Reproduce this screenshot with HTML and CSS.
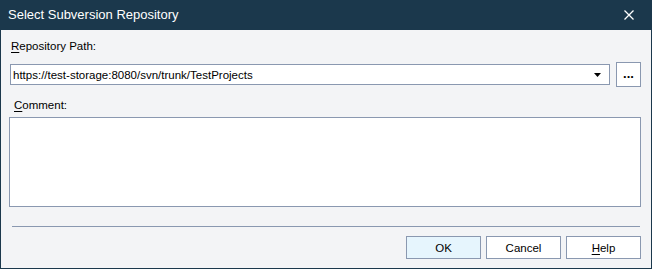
FILE: index.html
```html
<!DOCTYPE html>
<html lang="en">

<head>
  <meta charset="UTF-8" />
  <meta name="viewport" content="width=device-width, initial-scale=1.0" />
  <link rel="stylesheet" href="styles.css">
  <title>Select Subversion Repository</title>
</head>

<body>
  <div class="dialog">
    <div class="titlebar">
      <span class="title">Select Subversion Repository</span>
      <button class="close" aria-label="Close">
        <svg width="10" height="10" viewBox="0 0 10 10">
          <path d="M0.5 0.5 L9.5 9.5 M9.5 0.5 L0.5 9.5" stroke="#fff" stroke-width="1.3" fill="none" />
        </svg>
      </button>
    </div>

    <div class="content">
      <label class="label path-label"><u>R</u>epository Path:</label>
      <div class="path-row">
        <div class="combo">
          <span class="combo-text">https://test-storage:8080/svn/trunk/TestProjects</span>
          <svg class="arrow" width="7" height="4" viewBox="0 0 7 4">
            <polygon points="0,0 7,0 3.5,4" fill="#000" />
          </svg>
        </div>
        <button class="browse">...</button>
      </div>

      <label class="label comment-label"><u>C</u>omment:</label>
      <div class="comment"></div>

      <div class="separator"></div>

      <div class="buttons">
        <button class="btn default">OK</button>
        <button class="btn">Cancel</button>
        <button class="btn"><u>H</u>elp</button>
      </div>
    </div>
  </div>
</body>

</html>
```

FILE: styles.css
```css
* {
  box-sizing: border-box;
  padding: 0;
  margin: 0;
}

body {
  width: 652px;
  height: 269px;
  font-family: "Liberation Sans", Arial, sans-serif;
  font-size: 11.5px;
  color: #000;
  background: #f3f4f6;
}

u {
  text-decoration-thickness: 1px;
  text-underline-offset: 2px;
}

.dialog {
  width: 652px;
  height: 269px;
  display: flex;
  flex-direction: column;
}

.titlebar {
  height: 30px;
  background: #1b384c;
  display: flex;
  align-items: center;
  justify-content: space-between;
  padding: 0 18px 0 8px;
}

.title {
  color: #fff;
  font-size: 13px;
  line-height: 16px;
}

.close {
  background: none;
  border: none;
  width: 10px;
  height: 10px;
  display: flex;
}

.content {
  flex: 1;
  border: 1px solid #1b384c;
  border-top: none;
  padding: 0 10px 0 8px;
  display: flex;
  flex-direction: column;
}

.label {
  display: block;
  line-height: 16px;
}

.path-label {
  margin: 8px 0 0 2px;
}

.path-row {
  margin-top: 8px;
  display: flex;
  align-items: center;
  gap: 6px;
}

.combo {
  flex: 1;
  height: 21px;
  margin-left: 1px;
  background: #fff;
  border: 1px solid #8a98b0;
  display: flex;
  align-items: center;
  justify-content: space-between;
  padding: 0 8px 0 2px;
}

.combo-text {
  line-height: 16px;
}

.browse {
  width: 25px;
  height: 25px;
  background: #fff;
  border: 1px solid #8a98b0;
  font-family: inherit;
  font-size: 13px;
  font-weight: bold;
  line-height: 12px;
  padding-bottom: 2px;
}

.comment-label {
  margin: 10px 0 0 5px;
}

.comment {
  margin-top: 4px;
  height: 90px;
  background: #fff;
  border: 1px solid #8a98b0;
}

.separator {
  margin: 19px 0 0 3px;
  height: 1px;
  width: 628px;
  background: #8a98b0;
}

.buttons {
  margin-top: 9px;
  display: flex;
  justify-content: flex-end;
  gap: 5px;
}

.btn {
  width: 75px;
  height: 23px;
  background: #fff;
  border: 1px solid #8a98b0;
  font-family: inherit;
  font-size: 11.5px;
  color: #000;
}

.btn.default {
  background: #e6f5fd;
}
```
